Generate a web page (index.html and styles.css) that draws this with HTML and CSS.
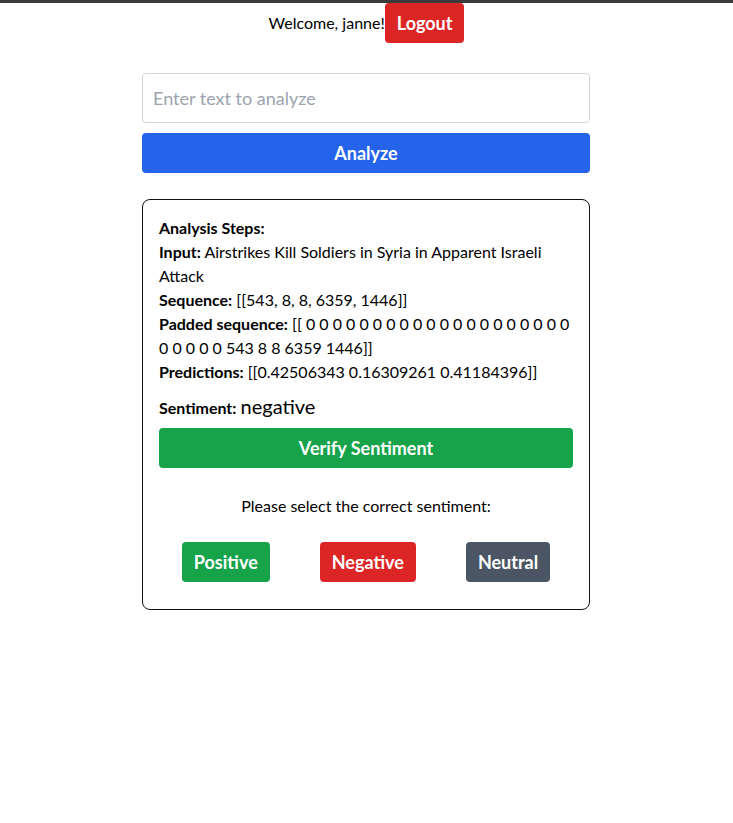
FILE: index.html
```html
<!DOCTYPE html>
<html>
<head>
<meta charset="utf-8">
<link rel="stylesheet" href="styles.css">
</head>
<body>
<div class="topbar"></div>
<header class="header">
  <span class="welcome">Welcome, janne!</span><button class="btn btn-red btn-logout">Logout</button>
</header>
<div class="page">
<main class="main">
  <input class="text-input" type="text" placeholder="Enter text to analyze">
  <button class="btn btn-blue btn-full">Analyze</button>
  <section class="card">
    <div class="steps">
      <div><b>Analysis Steps:</b></div>
      <div><b>Input:</b> Airstrikes Kill Soldiers in Syria in Apparent Israeli Attack</div>
      <div><b>Sequence:</b> [[543, 8, 8, 6359, 1446]]</div>
      <div><b>Padded sequence:</b> [[ 0 0 0 0 0 0 0 0 0 0 0 0 0 0 0 0 0 0 0 0 0 0 0 0 0 543 8 8 6359 1446]]</div>
      <div><b>Predictions:</b> [[0.42506343 0.16309261 0.41184396]]</div>
    </div>
    <div class="sentiment"><b>Sentiment:</b> <span class="sentiment-value">negative</span></div>
    <button class="btn btn-green btn-full btn-verify">Verify Sentiment</button>
    <p class="prompt">Please select the correct sentiment:</p>
    <div class="choices">
      <button class="btn btn-green">Positive</button>
      <button class="btn btn-red">Negative</button>
      <button class="btn btn-gray">Neutral</button>
    </div>
  </section>
</main>
</div>
</body>
</html>
```
FILE: styles.css
```css
* { box-sizing: border-box; }
html, body { margin: 0; padding: 0; background: #fff; }
body {
  font-family: Lato, "Noto Sans", sans-serif;
  font-size: 16px;
  line-height: 24px;
  color: #000;
}
.topbar { height: 3px; background: #3a3a3a; }
.header {
  display: flex;
  justify-content: center;
  align-items: center;
  height: 40px;
}
.welcome { font-size: 16px; }
.btn {
  border: none;
  border-radius: 4px;
  color: #fff;
  font-family: inherit;
  font-weight: 700;
  font-size: 18px;
  height: 40px;
  padding: 0 12px;
  cursor: pointer;
}
.btn-red { background: #dc2626; }
.btn-blue { background: #2563eb; }
.btn-green { background: #16a34a; }
.btn-gray { background: #4b5563; }
.btn-full { width: 100%; display: block; }
.page { padding-right: 1px; }
.main {
  width: 448px;
  margin: 30px auto 0;
}
.text-input {
  display: block;
  width: 100%;
  height: 50px;
  border: 1px solid #d1d5db;
  border-radius: 4px;
  padding: 0 10px;
  font-family: inherit;
  font-size: 18px;
  color: #111;
  margin-bottom: 10px;
}
.text-input::placeholder { color: #9ca3af; }
.card {
  margin-top: 26px;
  border: 1px solid #111;
  border-radius: 8px;
  padding: 16px 16px 27px;
}
.steps { font-size: 16px; }
.sentiment { margin-top: 8px; font-size: 16px; line-height: 28px; }
.sentiment-value { font-size: 20px; }
.btn-verify { margin-top: 6px; }
.prompt {
  text-align: center;
  margin: 26px 0 0;
  font-size: 16px;
}
.choices {
  display: flex;
  justify-content: center;
  gap: 50px;
  margin-top: 24px;
}
```
